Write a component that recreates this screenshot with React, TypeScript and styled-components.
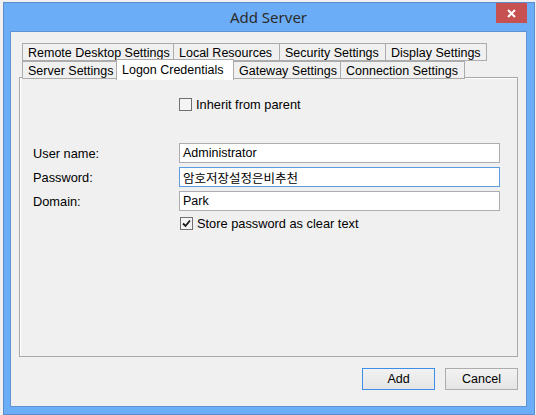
import styled, { createGlobalStyle } from 'styled-components';

const GlobalStyle = createGlobalStyle`
    html, body {
        margin: 0;
        padding: 0;
        background: #f0f0f0;
    }
    body {
        font-family: "Liberation Sans", Arial, sans-serif;
        font-size: 12px;
        color: #000;
    }
`;

const rowOne = [
    { label: 'Remote Desktop Settings', width: 152 },
    { label: 'Local Resources', width: 107 },
    { label: 'Security Settings', width: 107 },
    { label: 'Display Settings', width: 102 },
];

const rowTwo = [
    { label: 'Server Settings', width: 95 },
    { label: 'Logon Credentials', width: 118, active: true },
    { label: 'Gateway Settings', width: 108 },
    { label: 'Connection Settings', width: 125 },
];

const CheckMark = () => (
    <svg width="9" height="9" viewBox="0 0 9 9">
        <path d="M1 4.5 L3.5 7 L8 1.5" fill="none" stroke="#1a1a1a" strokeWidth="1.8" />
    </svg>
);

const App = () => {
    return (
        <>
            <GlobalStyle />
            <StyledWindow>
                <StyledTitleBar>
                    <StyledTitle>Add Server</StyledTitle>
                    <StyledClose>
                        <svg width="9" height="9" viewBox="0 0 9 9">
                            <path d="M1 1 L8 8 M8 1 L1 8" stroke="#fff" strokeWidth="2" />
                        </svg>
                    </StyledClose>
                </StyledTitleBar>

                <StyledBody>
                    <StyledTabs>
                        <StyledTabRow>
                            {rowOne.map(t => (
                                <StyledTab key={t.label} $width={t.width}>{t.label}</StyledTab>
                            ))}
                        </StyledTabRow>
                        <StyledTabRow>
                            {rowTwo.map(t => (
                                <StyledTab key={t.label} $width={t.width} $active={t.active}>{t.label}</StyledTab>
                            ))}
                        </StyledTabRow>
                    </StyledTabs>

                    <StyledPanel>
                        <StyledCheckRow>
                            <StyledBox />
                            <span>Inherit from parent</span>
                        </StyledCheckRow>

                        <StyledForm>
                            <StyledLabel>User name:</StyledLabel>
                            <StyledInput>Administrator</StyledInput>
                            <StyledLabel>Password:</StyledLabel>
                            <StyledInput $focused>암호저장설정은비추천</StyledInput>
                            <StyledLabel>Domain:</StyledLabel>
                            <StyledInput>Park</StyledInput>
                        </StyledForm>

                        <StyledCheckRow $store>
                            <StyledBox><CheckMark /></StyledBox>
                            <span>Store password as clear text</span>
                        </StyledCheckRow>
                    </StyledPanel>

                    <StyledButtons>
                        <StyledButton $primary>Add</StyledButton>
                        <StyledButton>Cancel</StyledButton>
                    </StyledButtons>
                </StyledBody>
            </StyledWindow>
        </>
    );
}

export default App;

const StyledWindow = styled.div`
    margin: 2px 1px 0 3px;
    height: 413px;
    box-sizing: border-box;
    border: 1px solid #5c8ccc;
    background: #6badf6;
    display: flex;
    flex-direction: column;
    padding: 0 7px 7px 6px;
`;

const StyledTitleBar = styled.div`
    position: relative;
    height: 28px;
    display: flex;
    align-items: center;
    justify-content: center;
    flex-shrink: 0;
`;

const StyledTitle = styled.div`
    font-family: "Noto Sans", "Open Sans", sans-serif;
    font-size: 15px;
    color: #2b2b2b;
    margin-top: -1px;
`;

const StyledClose = styled.div`
    position: absolute;
    top: 0;
    right: 0;
    width: 31px;
    height: 20px;
    background: #c75050;
    display: flex;
    align-items: center;
    justify-content: center;
`;

const StyledBody = styled.div`
    flex: 1;
    background: #f0f0f0;
    border: 1px solid #5e93d6;
    padding: 11px 8px 0 8px;
    display: flex;
    flex-direction: column;
`;

const StyledTabs = styled.div`
    display: flex;
    flex-direction: column;
    padding-left: 3px;
    position: relative;
    z-index: 1;
    margin-bottom: -1px;
`;

const StyledTabRow = styled.div`
    display: flex;
    height: 17px;
    &:first-child {
        height: 18px;
    }
`;

const StyledTab = styled.div<{ $width: number; $active?: boolean }>`
    box-sizing: border-box;
    width: ${p => p.$width}px;
    height: ${p => p.$active ? '21px' : '18px'};
    margin-top: ${p => p.$active ? '-2px' : '0'};
    background: ${p => p.$active ? '#ffffff' : '#f0f0f0'};
    border: 1px solid #acacac;
    border-bottom: ${p => p.$active ? 'none' : '1px solid #acacac'};
    margin-left: -1px;
    &:first-child { margin-left: 0; }
    display: flex;
    align-items: center;
    padding-left: 5px;
    padding-top: ${p => p.$active ? '0' : '1px'};
    white-space: nowrap;
    font-size: 12.5px;
    color: #000;
    z-index: ${p => p.$active ? 2 : 0};
    position: relative;
`;

const StyledPanel = styled.div`
    height: 280px;
    box-sizing: border-box;
    border: 1px solid #a8a8a8;
    box-shadow: inset 1px 1px 0 #ffffff;
    background: #f0f0f0;
    padding: 19px 17px 0 13px;
    display: flex;
    flex-direction: column;
`;

const StyledCheckRow = styled.div<{ $store?: boolean }>`
    display: flex;
    align-items: center;
    gap: 4px;
    margin-left: ${p => p.$store ? '147px' : '146px'};
    margin-top: ${p => p.$store ? '5px' : '0'};
    height: 15px;
    font-size: 12.8px;
`;

const StyledBox = styled.div`
    width: 13px;
    height: 13px;
    box-sizing: border-box;
    border: 1px solid #707070;
    background: #f4f4f4;
    display: flex;
    align-items: center;
    justify-content: center;
`;

const StyledForm = styled.div`
    display: grid;
    grid-template-columns: 146px 1fr;
    grid-auto-rows: 20px;
    row-gap: 4px;
    margin-top: 31px;
`;

const StyledLabel = styled.div`
    display: flex;
    align-items: center;
    font-size: 12.8px;
    padding-top: 1px;
`;

const StyledInput = styled.div<{ $focused?: boolean }>`
    box-sizing: border-box;
    height: 20px;
    background: #ffffff;
    border: 1px solid ${p => p.$focused ? '#5b9ce0' : '#abadb3'};
    display: flex;
    align-items: center;
    padding-left: 3px;
    font-family: "Liberation Sans", "Noto Sans CJK KR", sans-serif;
    font-size: 12.5px;
`;

const StyledButtons = styled.div`
    display: flex;
    justify-content: flex-end;
    gap: 10px;
    margin-top: 11px;
`;

const StyledButton = styled.div<{ $primary?: boolean }>`
    box-sizing: border-box;
    width: 73px;
    height: 22px;
    border: 1px solid ${p => p.$primary ? '#3d8ee6' : '#adadad'};
    background: linear-gradient(#f2f2f2, #e5e5e5);
    display: flex;
    align-items: center;
    justify-content: center;
    font-size: 12.5px;
`;
